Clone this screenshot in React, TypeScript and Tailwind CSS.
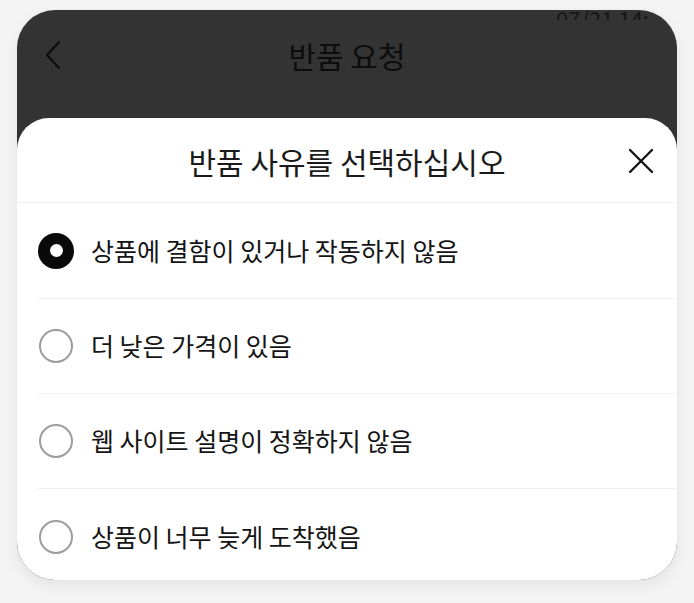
import { useState } from 'react';

const reasons = [
  '상품에 결함이 있거나 작동하지 않음',
  '더 낮은 가격이 있음',
  '웹 사이트 설명이 정확하지 않음',
  '상품이 너무 늦게 도착했음',
];

const font = { fontFamily: '"Noto Sans CJK KR", "Noto Sans", sans-serif' };

export default function App() {
  const [selected, setSelected] = useState(0);

  return (
    <div className="min-h-screen bg-[#f4f4f4] pt-[10px] pl-[17px]" style={font}>
      <div className="w-[660px] h-[570px] rounded-[38px] bg-[#333333] overflow-hidden flex flex-col shadow-[0_6px_16px_rgba(0,0,0,0.07)]">
        {/* status line, cut off at the top */}
        <div className="h-[10px] shrink-0 overflow-hidden flex items-end justify-end pr-[28px]">
          <span className="text-[22px] leading-none text-[#161616] translate-y-[9px]">07/21 14:</span>
        </div>

        {/* header */}
        <div className="h-[70px] shrink-0 flex items-center relative">
          <button className="ml-[27px] w-[18px] h-[30px] flex items-center">
            <svg width="17" height="30" viewBox="0 0 17 30" fill="none">
              <path d="M15 2 L3 15 L15 28" stroke="#0d0d0d" strokeWidth="2.2" strokeLinecap="round" strokeLinejoin="round" />
            </svg>
          </button>
          <h1 className="absolute left-0 right-0 text-center text-[30px] text-[#0d0d0d] pointer-events-none">반품 요청</h1>
        </div>
        <div className="h-[28px] shrink-0" />

        {/* sheet */}
        <div className="flex-1 min-h-0 bg-white rounded-t-[32px] flex flex-col">
          <div className="h-[85px] shrink-0 flex items-center relative border-b border-[#f1f1f1]">
            <h2 className="absolute left-0 right-0 text-center text-[30px] text-[#1a1a1a] pt-[3px]">반품 사유를 선택하십시오</h2>
            <button className="ml-auto mr-[22px] w-[28px] h-[28px] flex items-center justify-center pt-[2px]">
              <svg width="26" height="26" viewBox="0 0 26 26" fill="none">
                <path d="M2 2 L24 24 M24 2 L2 24" stroke="#111" strokeWidth="2.3" strokeLinecap="round" />
              </svg>
            </button>
          </div>

          <div className="flex flex-col">
            {reasons.map((r, i) => (
              <button
                key={r}
                onClick={() => setSelected(i)}
                className={`ml-[21px] flex items-center text-left shrink-0 ${i === 0 ? 'h-[96px]' : 'h-[95px]'} ${i < reasons.length - 1 ? 'border-b border-[#f1f1f1]' : ''}`}
              >
                <span className="w-9 h-9 flex items-center justify-center shrink-0">
                  {selected === i ? (
                    <span className="w-9 h-9 rounded-full bg-[#0a0a0a] flex items-center justify-center">
                      <span className="w-[13px] h-[13px] rounded-full bg-white" />
                    </span>
                  ) : (
                    <span className="w-[34px] h-[34px] rounded-full border-2 border-[#9c9c9c]" />
                  )}
                </span>
                <span className="ml-[17px] text-[25px] text-[#141414]">{r}</span>
              </button>
            ))}
          </div>
        </div>
      </div>
    </div>
  );
}
